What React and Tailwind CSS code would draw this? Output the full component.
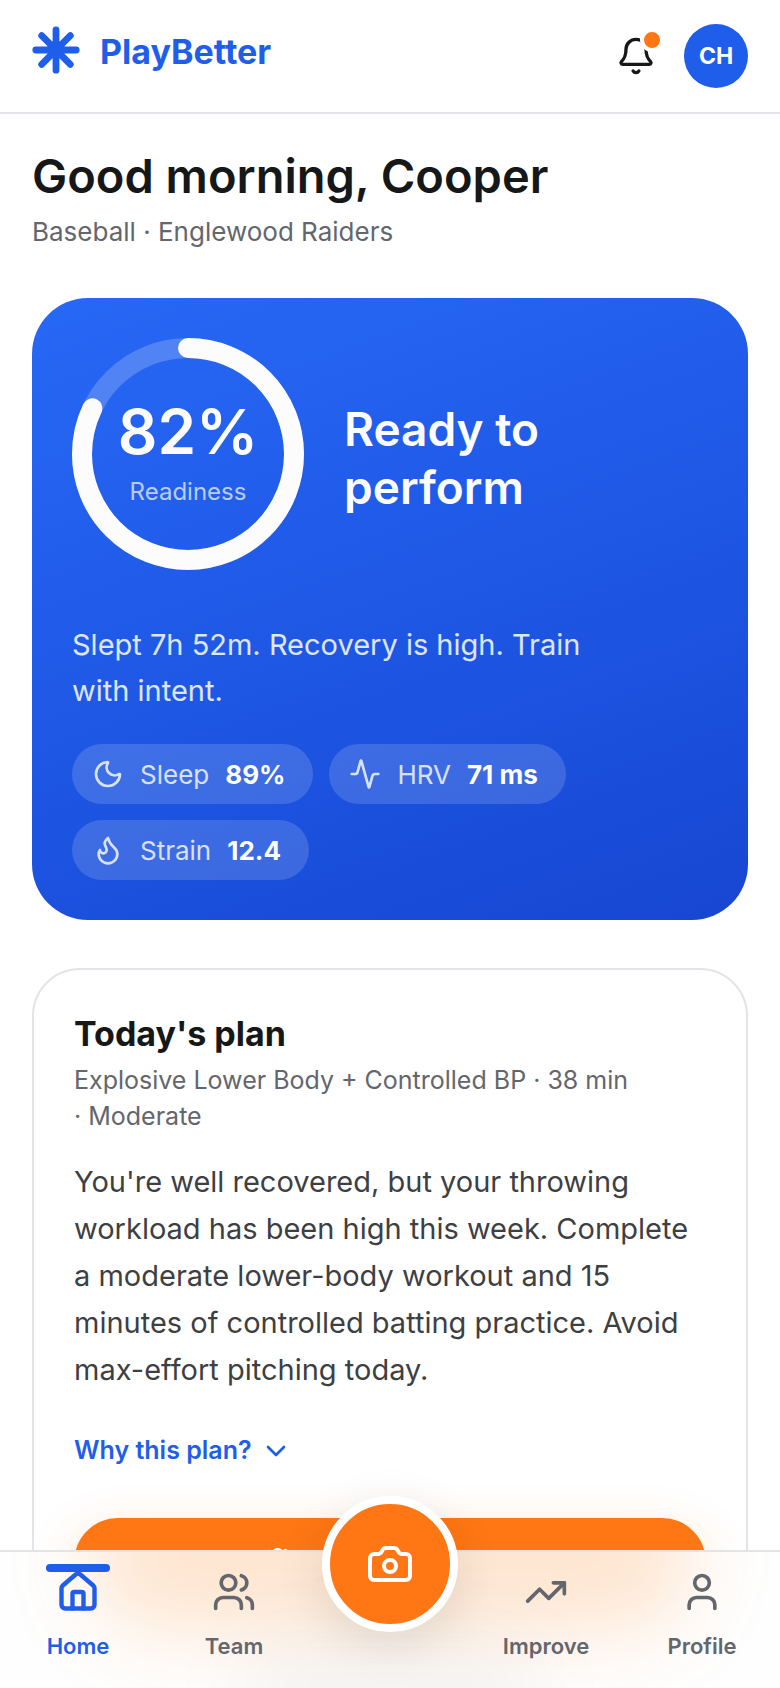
import {
  Activity,
  Bell,
  Camera,
  ChevronDown,
  Dumbbell,
  Flame,
  House,
  Moon,
  TrendingUp,
  User,
  Users,
} from 'lucide-react';

const stats = [
  { icon: Moon, label: 'Sleep', value: '89%' },
  { icon: Activity, label: 'HRV', value: '71 ms' },
  { icon: Flame, label: 'Strain', value: '12.4' },
];

function Logo() {
  return (
    <a href="#home" className="flex items-center gap-5 text-[#1f5eea]">
      <svg className="size-12" viewBox="0 0 48 48" fill="none" stroke="currentColor" strokeWidth="6.8" strokeLinecap="round" aria-hidden="true">
        <path d="M24 3.8v40.4M3.8 24h40.4M9.7 9.7l28.6 28.6M38.3 9.7L9.7 38.3" />
      </svg>
      <span className="pt-1 text-[34px] leading-12 font-bold">PlayBetter</span>
    </a>
  );
}

function Header() {
  return (
    <header className="flex shrink-0 items-start justify-between border-b-2 border-[#e3e3e8] px-8 pt-6 pb-6">
      <Logo />
      <div className="flex items-center gap-7">
        <button type="button" aria-label="Notifications" className="relative text-[#161718]">
          <Bell size={40} strokeWidth={2} />
          <span className="absolute -top-2 -right-2 size-6 rounded-full border-4 border-white bg-[#ff7614]" />
        </button>
        <button type="button" className="size-16 rounded-full bg-[#1f5eea] text-[23px] font-bold text-white">
          CH
        </button>
      </div>
    </header>
  );
}

function ReadinessRing({ percent }) {
  const radius = 106;
  const length = 2 * Math.PI * radius;

  return (
    <div className="relative size-[232px] shrink-0">
      <svg className="size-full -rotate-90" viewBox="0 0 232 232" fill="none" strokeWidth="20" aria-hidden="true">
        <circle cx="116" cy="116" r={radius} stroke="#fff" strokeOpacity="0.2" />
        <circle
          cx="116"
          cy="116"
          r={radius}
          stroke="#fcfcfd"
          strokeLinecap="round"
          strokeDasharray={length}
          strokeDashoffset={length * (1 - percent / 100)}
        />
      </svg>
      <div className="absolute inset-0 flex flex-col items-center justify-center gap-3">
        <span className="text-[62px] leading-16 font-semibold">{percent}%</span>
        <span className="text-2xl text-white/70">Readiness</span>
      </div>
    </div>
  );
}

function ReadinessCard() {
  return (
    <section className="rounded-[56px] bg-linear-160 from-[#2868f6] via-[#1e58e5] to-[#1746d2] p-10 text-[#fcfcfd]">
      <div className="flex items-center gap-10">
        <ReadinessRing percent={82} />
        <h2 className="max-w-60 pt-2 text-[46px] leading-[58px] font-semibold">Ready to perform</h2>
      </div>
      <p className="mt-13 max-w-[520px] text-[29px] leading-[46px] text-white/85">
        Slept 7h 52m. Recovery is high. Train with intent.
      </p>
      <ul className="mt-[30px] flex flex-wrap gap-4">
        {stats.map(({ icon: Icon, label, value }) => (
          <li key={label} className="flex h-15 items-center gap-4 rounded-full bg-white/15 pr-7 pl-5 text-[26px]">
            <Icon size={32} strokeWidth={2} className="text-white/80" />
            <span className="text-white/80">{label}</span>
            <strong className="font-bold text-white">{value}</strong>
          </li>
        ))}
      </ul>
    </section>
  );
}

function PlanCard() {
  return (
    <section className="rounded-[48px] border-2 border-[#e3e3e8] p-10">
      <h2 className="text-[34px] leading-12 font-bold text-[#161718]">Today's plan</h2>
      <p className="mt-1 max-w-[560px] text-[25px] leading-9 text-[#63666d]">
        Explosive Lower Body + Controlled BP · 38 min · Moderate
      </p>
      <p className="mt-6 text-[29px] leading-[47px] text-[#3d3f43]">
        You're well recovered, but your throwing workload has been high this week. Complete a moderate
        lower-body workout and 15 minutes of controlled batting practice. Avoid max-effort pitching today.
      </p>
      <button type="button" className="mt-[34px] flex h-12 items-center gap-2 text-[25px] font-semibold text-[#1f5eea]">
        Why this plan?
        <ChevronDown size={32} strokeWidth={2} />
      </button>
      <button
        type="button"
        aria-label="Start plan"
        className="mt-[43px] flex h-25 w-full items-center rounded-[44px] bg-[#ff7614] px-43 text-white shadow-[0_16px_48px_rgba(255,118,20,0.25)]"
      >
        <Dumbbell size={44} />
      </button>
    </section>
  );
}

function NavItem({ icon: Icon, label, active }) {
  return (
    <a
      href={`#${label.toLowerCase()}`}
      aria-current={active ? 'page' : undefined}
      className={
        active
          ? 'relative flex flex-col items-center gap-4 pt-[18px] text-[#1f5eea]'
          : 'relative flex flex-col items-center gap-4 pt-[18px] text-[#63666d]'
      }
    >
      {active && <span className="absolute top-3 h-2 w-16 rounded-full bg-[#1f5eea]" />}
      <Icon size={44} strokeWidth={active ? 2.4 : 2} />
      <span className="text-[22px] leading-8 font-semibold">{label}</span>
    </a>
  );
}

function BottomNav() {
  return (
    <nav className="fixed inset-x-0 bottom-0">
      {/* soft orange and grey glow in the bar */}
      <div className="absolute inset-0 overflow-hidden bg-[#fefefe]">
        <div className="absolute inset-x-22 -top-16 h-36 rounded-full bg-[#ff8014]/20 blur-2xl" />
        <div className="absolute inset-x-60 -bottom-12 h-24 rounded-full bg-black/4 blur-2xl" />
      </div>
      <div className="relative grid h-[138px] grid-cols-5 border-t-2 border-[#e3e3e8]">
        <NavItem icon={House} label="Home" active />
        <NavItem icon={Users} label="Team" />
        <button
          type="button"
          aria-label="Camera"
          className="-mt-14 flex size-34 items-center justify-center justify-self-center rounded-full border-8 border-white bg-[#ff7614] text-white shadow-[0_12px_48px_rgba(0,0,0,0.1)]"
        >
          <Camera size={48} strokeWidth={2} />
        </button>
        <NavItem icon={TrendingUp} label="Improve" />
        <NavItem icon={User} label="Profile" />
      </div>
    </nav>
  );
}

export default function App() {
  return (
    <div className="flex h-screen flex-col bg-white font-['Inter',sans-serif]">
      <Header />
      <main className="flex flex-1 flex-col gap-12 overflow-y-auto px-8 pt-8 pb-40 [scrollbar-width:none]">
        <div>
          <h1 className="text-[47px] leading-[60px] font-semibold text-[#161718]">Good morning, Cooper</h1>
          <p className="mt-2 text-[26px] leading-9 text-[#63666d]">Baseball · Englewood Raiders</p>
        </div>
        <ReadinessCard />
        <PlanCard />
      </main>
      <BottomNav />
    </div>
  );
}
